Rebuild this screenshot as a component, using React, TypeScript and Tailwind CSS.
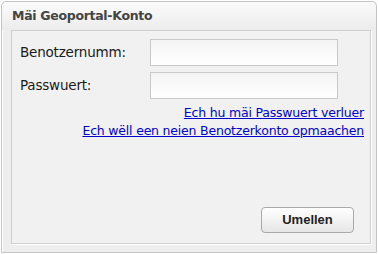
export default function App() {
  return (
    <div className="w-[378px] h-[254px] bg-white p-[1px] font-['DejaVu_Sans',sans-serif]">
      <div className="h-full flex flex-col rounded-t-[5px] border border-[#c4c4c4] bg-[#eeeeee] shadow-[inset_1px_1px_0_#ffffff]">
        <div className="h-[28px] flex items-center px-[10px] bg-gradient-to-b from-[#fbfbfb] to-[#ececec] rounded-t-[5px]">
          <span className="text-[12.5px] font-bold text-[#444444] tracking-[-0.3px]">Mäi Geoportal-Konto</span>
        </div>
        <div className="flex-1 ml-[9px] mr-[5px] mb-[8px] border border-[#cfcfcf] bg-[#f1f1f1] shadow-[1px_1px_0_#ffffff] flex flex-col pt-[8px] pr-[6px] pl-[8px] pb-[10px]">
          <div className="flex items-center h-[27px]">
            <span className="w-[130px] text-[13.5px] text-[#1a1a1a] tracking-[-0.2px]">Benotzernumm:</span>
            <input className="w-[188px] h-[27px] border border-[#c8c8c8] bg-gradient-to-b from-[#f4f4f4] to-white outline-none" />
          </div>
          <div className="flex items-center h-[27px] mt-[6px]">
            <span className="w-[130px] text-[13.5px] text-[#1a1a1a] tracking-[-0.2px]">Passwuert:</span>
            <input type="password" className="w-[188px] h-[27px] border border-[#c8c8c8] bg-gradient-to-b from-[#f4f4f4] to-white outline-none" />
          </div>
          <div className="flex flex-col items-end mt-[5px] text-[12.5px] leading-[18px] tracking-[-0.2px]">
            <a href="#" className="text-[#0000cc] underline">Ech hu mäi Passwuert verluer</a>
            <a href="#" className="text-[#0000cc] underline">Ech wëll een neien Benotzerkonto opmaachen</a>
          </div>
          <div className="flex-1" />
          <div className="flex justify-end pr-[10px]">
            <button className="w-[93px] h-[26px] rounded-[4px] border border-[#a9a9a9] bg-gradient-to-b from-[#ffffff] to-[#e6e6e6] text-[13px] font-bold text-[#222] font-['Liberation_Sans',sans-serif]">
              Umellen
            </button>
          </div>
        </div>
      </div>
    </div>
  );
}
